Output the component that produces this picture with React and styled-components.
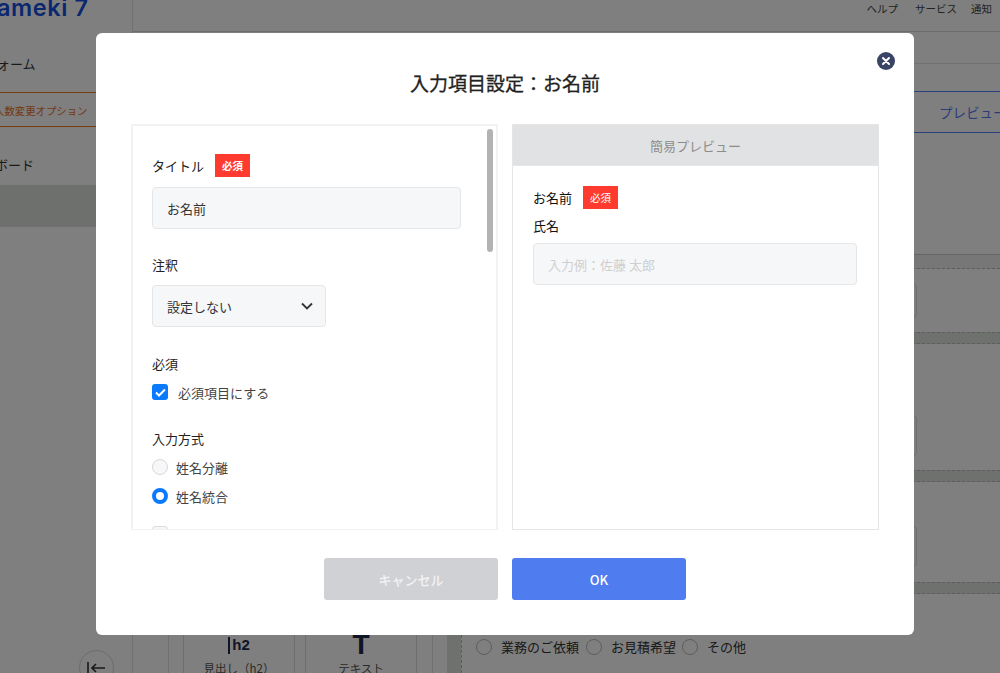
import React from 'react';
import styled, { createGlobalStyle } from 'styled-components';

const FONT = `"Noto Sans CJK JP", "Noto Sans", "Liberation Sans", sans-serif`;

const Global = createGlobalStyle`
  html, body { margin: 0; padding: 0; height: 100%; overflow: hidden; background: #fff; }
  body { font-family: ${FONT}; color: #333; }
  * { box-sizing: border-box; }
`;

const Page = styled.div`
  width: 1000px; height: 673px; display: grid; grid-template-columns: 133px 1fr; overflow: hidden;
`;

/* ---- background app ---- */
const Sidebar = styled.aside`
  height: 673px; border-right: 1px solid #e2e2e2; display: flex; flex-direction: column; overflow: hidden;
`;
const Logo = styled.div`
  font: 600 23.5px/20px "Inter", ${FONT}; color: #1450e0; margin-left: -3px; height: 56px; margin-top: -2px; letter-spacing: 0.6px; white-space: nowrap;
`;
const SideItem = styled.div`
  font-size: 13px; line-height: 20px; margin-left: ${p => p.$indent || 0}px; margin-top: ${p => p.$mt || 0}px; white-space: nowrap;
`;
const OptionBanner = styled.div`
  height: 35px; margin-top: 18px; border-top: 1px solid #f07a1a; border-bottom: 1px solid #f07a1a; color: #e8702a; font-size: 10.4px; line-height: 35px; white-space: nowrap; margin-left: -6px;
`;
const ActiveRow = styled.div` height: 42px; background: #dde0dd; margin-top: 10px; `;
const Collapse = styled.div`
  margin-top: auto; margin-bottom: -12px; margin-left: 79px; width: 35px; height: 35px; flex: none; border-radius: 50%; border: 1px solid #d8d8d8; background: #fff; display: flex; align-items: center; justify-content: center;
`;
const Main = styled.main` display: flex; flex-direction: column; height: 673px; overflow: hidden; `;
const TopBar = styled.div`
  height: 32px; flex: none; border-bottom: 1px solid #d8d8d8; display: flex; justify-content: flex-end; gap: 14px; padding: 1px 8px 0 0; font-size: 10.5px; line-height: 16px; color: #444;
`;
const HelpLink = styled.span` margin-right: 3px; `;
const SubBar = styled.div` height: 32px; flex: none; border-bottom: 1px solid #e4e4e4; `;
const TabRow = styled.div`
  height: 42px; flex: none; margin-top: 27px; border-top: 1px solid #4f85ff; border-bottom: 1px solid #4f85ff; color: #5a7bf0; font-size: 13.5px; line-height: 40px; padding-left: 806px; white-space: nowrap; overflow: hidden;
`;
const Workspace = styled.div` flex: 1; display: flex; min-height: 0; `;
const Palette = styled.div`
  flex: none; margin-left: 35px; padding: 0 16px 0 14px; border-left: 1px solid #e0e0e0; border-right: 1px solid #e0e0e0; width: 265px; display: flex; gap: 10px; align-items: flex-end; margin-bottom: -12px;
`;
const Tool = styled.div`
  width: 112px; height: 66px; flex: none; border: 1px solid #ddd; border-radius: 3px; display: flex; flex-direction: column; align-items: center; justify-content: flex-end; padding-bottom: 8px;
`;
const ToolIcon = styled.div`
  color: #1f2a4a; font: 700 ${p => p.$big ? 28 : 15}px/24px "Liberation Sans", sans-serif; display: flex; align-items: center; gap: 2px; height: 24px; margin-bottom: 3px;
`;
const ToolBar = styled.span` width: 2px; height: 17px; background: #1f2a4a; `;
const ToolLabel = styled.div` font-size: 11.5px; line-height: 16px; color: #555; `;
const Canvas = styled.div`
  flex: 1; margin-left: 14px; padding-top: 121px; min-width: 0; display: flex; flex-direction: column;
`;
const FormTrack = styled.div`
  flex: 1; background: #dfe2df; padding-left: 14px; display: flex; flex-direction: column;
`;
const Form = styled.div`
  flex: 1; background: #fff; border-left: 1px dashed #bbb; display: flex; flex-direction: column;
`;
const FormHead = styled.div` height: 15px; flex: none; background: #eceeec; margin-left: -1px; border-top: 1px solid #cfcfcf; border-bottom: 1px dashed #bbb; `;
const Gutter = styled.div` height: ${p => p.$h}px; flex: none; background: #dfe2df; border-top: 1px dashed #bbb; border-bottom: 1px dashed #bbb; `;
const FieldRow = styled.div` height: ${p => p.$h}px; flex: none; padding: ${p => p.$top}px 83px 0 0; `;
const FieldBox = styled.div` height: ${p => p.$h}px; border: 1px solid #ddd; border-radius: 4px; background: #fff; `;
const ChoiceRow = styled.div` display: flex; align-items: center; font-size: 13px; line-height: 20px; padding: 43px 0 0 14px; color: #333; `;
const ChoiceDot = styled.span` width: 16px; height: 16px; border-radius: 50%; border: 1px solid #bbb; margin-left: ${p => p.$before || 0}px; margin-right: 9px; flex: none; `;

/* ---- modal ---- */
const Overlay = styled.div`
  position: fixed; inset: 0; background: rgba(0,0,0,.5); padding: 33px 0 0 96px;
`;
const Modal = styled.div`
  position: relative; width: 818px; height: 602px; background: #fff; border-radius: 6px; padding: 0 35px;
`;
const Close = styled.button`
  position: absolute; top: 19px; right: 19px; width: 18px; height: 18px; padding: 0; border: 0; border-radius: 50%; background: #3a4566; display: flex; align-items: center; justify-content: center;
`;
const Title = styled.h2`
  margin: 0; height: 91px; padding-top: 35px; text-align: center; font: 400 19px/30px ${FONT}; color: #222; -webkit-text-stroke: 0.3px #222;
`;
const Panels = styled.div` display: flex; gap: 14px; `;
const Panel = styled.section`
  position: relative; width: 367px; height: 406px; border: 2px solid #f2f2f2; border-bottom-width: 1px; overflow: hidden;
`;
const SidePanel = styled(Panel)` border-width: 1px; border-color: #e6e6e6; `;
const Settings = styled.div` padding: 28px 0 0 19px; `;
const Thumb = styled.div`
  position: absolute; top: 3px; right: 3px; width: 6px; height: 123px; border-radius: 3px; background: #b3b3b3;
`;
const LabelRow = styled.div` display: flex; align-items: center; height: 23px; gap: ${p => p.$gap || 11}px; `;
const Label = styled.div` font-size: 13px; line-height: 20px; color: ${p => p.$dark ? '#111' : '#222'}; `;
const Badge = styled.span`
  width: 35px; height: 23px; background: #ff3b30; color: #fff; font-size: 10.5px; font-weight: ${p => p.$bold ? 700 : 400}; display: flex; align-items: center; justify-content: center;
`;
const Input = styled.div`
  height: 42px; margin-top: ${p => p.$mt || 0}px; width: ${p => p.$w}px; background: #f6f7f9; border: 1px solid #e5e6e8; border-radius: 4px; padding: 0 14px; display: flex; align-items: center; justify-content: space-between; font-size: 13px; color: ${p => p.$placeholder ? '#cfcfcf' : '#333'};
`;
const Chevron = styled.svg` margin-right: -2px; `;
const Block = styled.div` margin-top: ${p => p.$mt}px; `;
const CheckLine = styled.div` display: flex; align-items: center; font-size: 13px; color: #444; height: 16px; margin-top: ${p => p.$mt || 0}px; `;
const Check = styled.span`
  width: 16px; height: 16px; border-radius: 3px; flex: none; margin-right: 10px; display: flex; align-items: center; justify-content: center;
  background: ${p => p.$on ? '#0a7bff' : '#f6f7f9'}; border: ${p => p.$on ? '0' : '1px solid #ddd'};
`;
const Radio = styled.span`
  width: 16px; height: 16px; border-radius: 50%; flex: none; margin-right: 8px;
  ${p => p.$on ? 'background:#fff;border:4.5px solid #0a7bff;' : 'background:#f6f7f9;border:1px solid #d8d8d8;'}
`;
const PreviewHead = styled.div`
  height: 42px; margin: -1px -1px 0; background: #e1e2e4; border-bottom: 1px solid #e6e6e6; text-align: center; font-size: 13px; line-height: 44px; color: #8c8c8c;
`;
const PreviewBody = styled.div` padding: 20px 0 0 20px; `;
const PreviewField = styled(Label)` margin-top: 7px; `;
const Footer = styled.div` display: flex; justify-content: center; gap: 14px; margin-top: 28px; `;
const Button = styled.button`
  width: 174px; height: 42px; border: 0; border-radius: 3px; background: ${p => p.$primary ? '#4f7cee' : '#d0d1d5'}; color: ${p => p.$primary ? '#fff' : '#f3f3f5'}; font: 500 13px ${FONT}; padding: 0;
`;

export default function App() {
  return (
    <>
      <Global />
      <Page>
        <Sidebar>
          <Logo>ameki 7</Logo>
          <SideItem $indent={-3}>ォーム</SideItem>
          <OptionBanner>人数変更オプション</OptionBanner>
          <SideItem $indent={-5} $mt={28}>ボード</SideItem>
          <ActiveRow />
          <Collapse>
            <svg width="20" height="14" viewBox="0 0 20 14" fill="none" stroke="#333" strokeWidth="1.6">
              <path d="M1 1v12M18 7H5M9 3 5 7l4 4" />
            </svg>
          </Collapse>
        </Sidebar>
        <Main>
          <TopBar>
            <HelpLink>ヘルプ</HelpLink>
            <span>サービス</span>
            <span>通知</span>
          </TopBar>
          <SubBar />
          <TabRow>プレビュー</TabRow>
          <Workspace>
            <Palette>
              <Tool>
                <ToolIcon><ToolBar />h2</ToolIcon>
                <ToolLabel>見出し（h2）</ToolLabel>
              </Tool>
              <Tool>
                <ToolIcon $big>T</ToolIcon>
                <ToolLabel>テキスト</ToolLabel>
              </Tool>
            </Palette>
            <Canvas>
              <FormTrack>
                <Form>
                  <FormHead />
                  <FieldRow $h={63} $top={14}><FieldBox $h={35} /></FieldRow>
                  <Gutter $h={12} />
                  <FieldRow $h={126} $top={71}><FieldBox $h={41} /></FieldRow>
                  <Gutter $h={12} />
                  <FieldRow $h={100} $top={44}><FieldBox $h={41} /></FieldRow>
                  <Gutter $h={12} />
                  <ChoiceRow>
                    <ChoiceDot />業務のご依頼
                    <ChoiceDot $before={7} />お見積希望
                    <ChoiceDot $before={6} />その他
                  </ChoiceRow>
                </Form>
              </FormTrack>
            </Canvas>
          </Workspace>
        </Main>
      </Page>
      <Overlay>
        <Modal>
          <Close aria-label="閉じる">
            <svg width="10" height="10" viewBox="0 0 10 10" stroke="#fff" strokeWidth="2" strokeLinecap="round">
              <path d="M2 2l6 6M8 2l-6 6" />
            </svg>
          </Close>
          <Title>入力項目設定：お名前</Title>
          <Panels>
            <Panel>
              <Settings>
                <LabelRow><Label>タイトル</Label><Badge $bold>必須</Badge></LabelRow>
                <Input $w={309} $mt={10}>お名前</Input>
                <Block $mt={26}>
                  <Label>注釈</Label>
                  <Input $w={174} $mt={10}>
                    設定しない
                    <Chevron width="12" height="8" viewBox="0 0 12 8" fill="none" stroke="#333" strokeWidth="1.8">
                      <path d="M1 1.5 6 6.5 11 1.5" />
                    </Chevron>
                  </Input>
                </Block>
                <Block $mt={27}>
                  <Label>必須</Label>
                  <CheckLine $mt={10}>
                    <Check $on>
                      <svg width="11" height="9" viewBox="0 0 11 9" fill="none" stroke="#fff" strokeWidth="2">
                        <path d="M1 4.5 4 7.5 10 1.5" />
                      </svg>
                    </Check>
                    必須項目にする
                  </CheckLine>
                </Block>
                <Block $mt={29}>
                  <Label>入力方式</Label>
                  <CheckLine $mt={10}><Radio />姓名分離</CheckLine>
                  <CheckLine $mt={13}><Radio $on />姓名統合</CheckLine>
                  <CheckLine $mt={22}><Check /></CheckLine>
                </Block>
              </Settings>
              <Thumb />
            </Panel>
            <SidePanel>
              <PreviewHead>簡易プレビュー</PreviewHead>
              <PreviewBody>
                <LabelRow><Label $dark>お名前</Label><Badge>必須</Badge></LabelRow>
                <PreviewField $dark>氏名</PreviewField>
                <Input $w={324} $mt={7} $placeholder>入力例：佐藤 太郎</Input>
              </PreviewBody>
            </SidePanel>
          </Panels>
          <Footer>
            <Button>キャンセル</Button>
            <Button $primary>OK</Button>
          </Footer>
        </Modal>
      </Overlay>
    </>
  );
}
